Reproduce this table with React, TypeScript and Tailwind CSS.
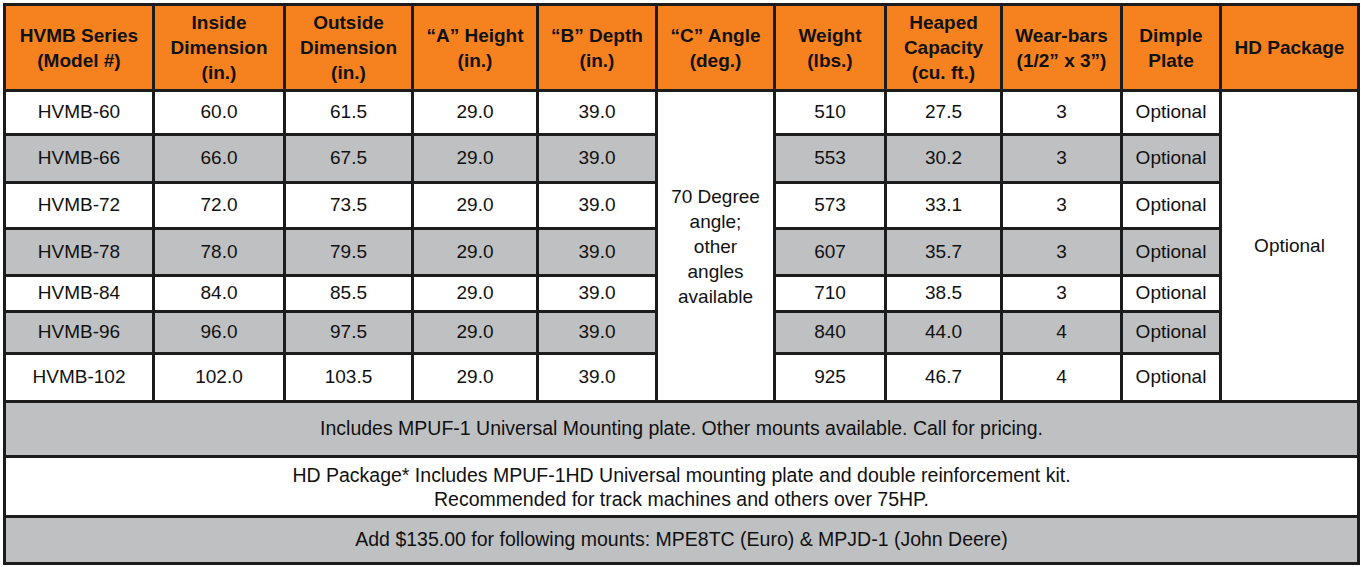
import React from "react";

interface Row {
	model: string;
	inside: string;
	outside: string;
	weight: string;
	capacity: string;
	bars: string;
	h: string;
	gray: boolean;
}

const rows: Row[] = [
	{ model: "HVMB-60", inside: "60.0", outside: "61.5", weight: "510", capacity: "27.5", bars: "3", h: "h-[44px]", gray: false },
	{ model: "HVMB-66", inside: "66.0", outside: "67.5", weight: "553", capacity: "30.2", bars: "3", h: "h-[48px]", gray: true },
	{ model: "HVMB-72", inside: "72.0", outside: "73.5", weight: "573", capacity: "33.1", bars: "3", h: "h-[46px]", gray: false },
	{ model: "HVMB-78", inside: "78.0", outside: "79.5", weight: "607", capacity: "35.7", bars: "3", h: "h-[47px]", gray: true },
	{ model: "HVMB-84", inside: "84.0", outside: "85.5", weight: "710", capacity: "38.5", bars: "3", h: "h-[36px]", gray: false },
	{ model: "HVMB-96", inside: "96.0", outside: "97.5", weight: "840", capacity: "44.0", bars: "4", h: "h-[42px]", gray: true },
	{ model: "HVMB-102", inside: "102.0", outside: "103.5", weight: "925", capacity: "46.7", bars: "4", h: "h-[48px]", gray: false },
];

const headers = [
	["HVMB Series", "(Model #)"],
	["Inside", "Dimension", "(in.)"],
	["Outside", "Dimension", "(in.)"],
	["\u201CA\u201D Height", "(in.)"],
	["\u201CB\u201D Depth", "(in.)"],
	["\u201CC\u201D Angle", "(deg.)"],
	["Weight", "(lbs.)"],
	["Heaped", "Capacity", "(cu. ft.)"],
	["Wear-bars", "(1/2\u201D x 3\u201D)"],
	["Dimple", "Plate"],
	["HD Package"],
];

const cell = "border-[3px] border-[#1c1c1c] p-0 text-center align-middle";

const App: React.FC = () => {
	return (
		<div className="w-[1361px] h-[567px] bg-white pt-[3px] pl-[3px] font-['Liberation_Sans',Arial,sans-serif] text-[19px] text-[#111]">
			<table className="table-fixed border-collapse w-[1354px]">
				<colgroup>
					<col className="w-[149px]" />
					<col className="w-[131px]" />
					<col className="w-[128px]" />
					<col className="w-[125px]" />
					<col className="w-[119px]" />
					<col className="w-[118px]" />
					<col className="w-[111px]" />
					<col className="w-[116px]" />
					<col className="w-[120px]" />
					<col className="w-[99px]" />
					<col className="w-[138px]" />
				</colgroup>
				<thead>
					<tr className="h-[86px] bg-[#f5821f]">
						{headers.map((lines, i) => (
							<th key={i} className={`${cell} font-bold leading-[25px]`}>
								{lines.map((l, j) => (
									<div key={j}>{l}</div>
								))}
							</th>
						))}
					</tr>
				</thead>
				<tbody>
					{rows.map((r, i) => (
						<tr key={r.model} className={`${r.h} ${r.gray ? "bg-[#bfc0c2]" : "bg-white"}`}>
							<td className={cell}>{r.model}</td>
							<td className={cell}>{r.inside}</td>
							<td className={cell}>{r.outside}</td>
							<td className={cell}>29.0</td>
							<td className={cell}>39.0</td>
							{i === 0 && (
								<td rowSpan={7} className={`${cell} bg-white leading-[25px]`}>
									70 Degree
									<br />
									angle;
									<br />
									other
									<br />
									angles
									<br />
									available
								</td>
							)}
							<td className={cell}>{r.weight}</td>
							<td className={cell}>{r.capacity}</td>
							<td className={cell}>{r.bars}</td>
							<td className={cell}>Optional</td>
							{i === 0 && (
								<td rowSpan={7} className={`${cell} bg-white`}>
									Optional
								</td>
							)}
						</tr>
					))}
					<tr className="h-[55px] bg-[#bfc0c2]">
						<td colSpan={11} className={`${cell} text-[19.5px]`}>
							Includes MPUF-1 Universal Mounting plate. Other mounts available. Call for pricing.
						</td>
					</tr>
					<tr className="h-[60px] bg-white">
						<td colSpan={11} className={`${cell} text-[19.5px] leading-[24px]`}>
							HD Package* Includes MPUF-1HD Universal mounting plate and double reinforcement kit.
							<br />
							Recommended for track machines and others over 75HP.
						</td>
					</tr>
					<tr className="h-[47px] bg-[#bfc0c2]">
						<td colSpan={11} className={`${cell} text-[19.5px]`}>
							Add $135.00 for following mounts: MPE8TC (Euro) &amp; MPJD-1 (John Deere)
						</td>
					</tr>
				</tbody>
			</table>
		</div>
	);
};

export default App;
